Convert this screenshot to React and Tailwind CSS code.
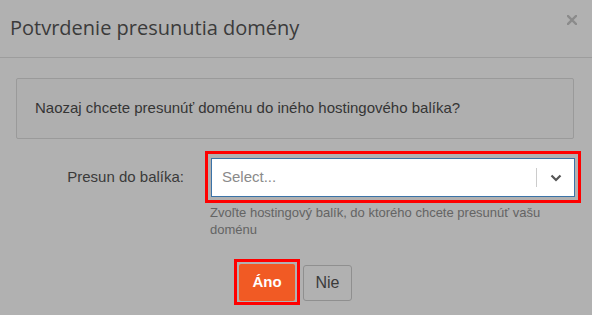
export default function App() {
  return (
    <div className="h-[315px] w-[592px] overflow-hidden bg-[#b1b1b1] font-['Liberation_Sans',Arial,sans-serif] text-[#333]">
      {/* header */}
      <header className="flex h-[58px] items-center justify-between border-b border-[#9d9d9d] pl-[10px] pr-[15px]">
        <h1 className="-mt-[1px] font-['Open_Sans',sans-serif] text-[20px] text-[#3b3b3b]">
          Potvrdenie presunutia domény
        </h1>
        <button type="button" className="-mt-[17px] text-[#8b8b8b]" aria-label="Zavrieť">
          <svg width="10" height="10" viewBox="0 0 10 10" aria-hidden="true">
            <path d="M1 1l8 8M9 1l-8 8" stroke="currentColor" strokeWidth="2.4" strokeLinecap="square" />
          </svg>
        </button>
      </header>

      <div className="pl-[16px] pr-[18px] pt-[20px]">
        <div className="flex h-[61px] items-center rounded-[2px] border border-[#9a9a9a] bg-[#afafaf] pl-[18px] text-[15px] text-[#353535]">
          Naozaj chcete presunúť doménu do iného hostingového balíka?
        </div>
      </div>

      {/* form row */}
      <div className="mt-[12px] flex">
        <label className="w-[184px] pt-[15px] text-right text-[15px] text-[#3a3a3a]">
          Presun do balíka:
        </label>
        <div className="ml-[21px]">
          <div className="w-[376px] border-[3px] border-[#ff0000] px-[3px] pb-[3px] pt-[4px]">
            <div className="flex h-[39px] items-center border border-[#3b73a8] bg-white">
              <span className="flex-1 pl-[10px] text-[15px] text-[#8a8a8a]">Select...</span>
              <span className="h-[19px] w-px bg-[#cccccc]" />
              <span className="flex w-[37px] items-center justify-center text-[#555]">
                <svg width="12" height="8" viewBox="0 0 12 8" aria-hidden="true">
                  <path d="M1.5 1.5L6 6l4.5-4.5" fill="none" stroke="currentColor" strokeWidth="2.2" />
                </svg>
              </span>
            </div>
          </div>
          <p className="w-[365px] pl-[5px] pt-[1px] text-[13px] leading-[17px] text-[#646464]">
            Zvoľte hostingový balík, do ktorého chcete presunúť vašu doménu
          </p>
        </div>
      </div>

      {/* buttons */}
      <div className="mt-[21px] flex items-start pl-[234px]">
        <div className="border-[3px] border-[#ff0000] px-[2px] pb-[1px] pt-[2px]">
          <button
            type="button"
            className="h-[37px] w-[56px] rounded-[2px] bg-[#f15a24] text-[15px] font-bold text-white"
          >
            Áno
          </button>
        </div>
        <button
          type="button"
          className="ml-[3px] mt-[6px] h-[36px] w-[49px] rounded-[3px] border border-[#8f8f8f] text-[16px] text-[#3a3a3a]"
        >
          Nie
        </button>
      </div>
    </div>
  )
}
